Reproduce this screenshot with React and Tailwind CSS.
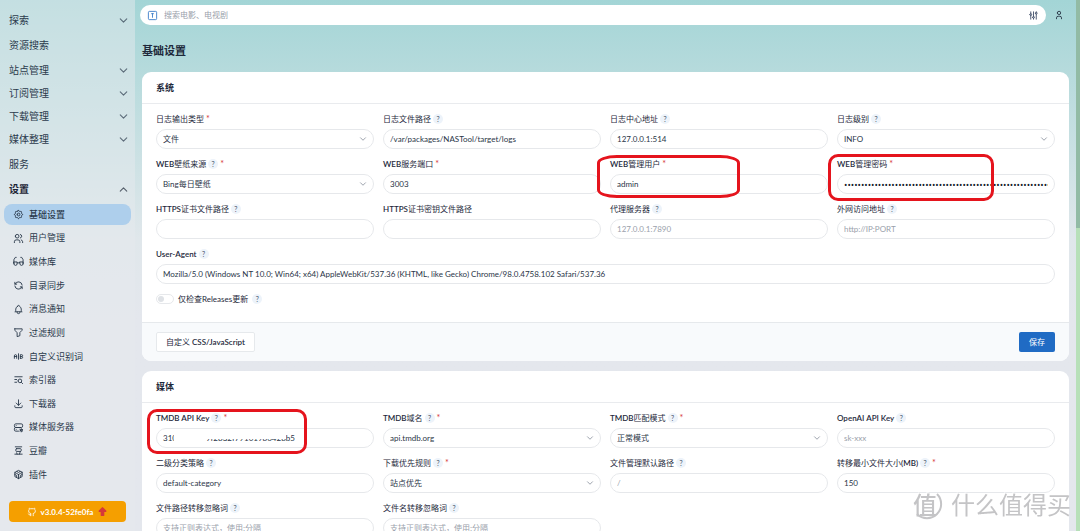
import {
  TbSettings,
  TbUsers,
  TbRefresh,
  TbBell,
  TbFilter,
  TbAB,
  TbListSearch,
  TbDownload,
  TbServerCog,
  TbBrandDouban,
  TbBrandCodesandbox,
  TbChevronDown,
  TbChevronUp,
  TbSquareLetterT,
  TbAdjustments,
  TbUser,
  TbBrandGithub,
  TbArrowBigUpFilled,
} from "react-icons/tb";

const GlassesIcon = ({ className }) => (
  <svg
    viewBox="0 0 24 24"
    className={className}
    fill="none"
    stroke="currentColor"
    strokeWidth="2"
    strokeLinecap="round"
    strokeLinejoin="round"
  >
    <path d="M7 3H5L2 8v9M17 3h2l3 5v9" />
    <path d="M2 13h7v4a3.500 3.500 0 0 1-7 0zM15 13h7v4a3.500 3.500 0 0 1-7 0zM9 15h6" />
  </svg>
);

const topMenu = [
  { label: "探索", group: true },
  { label: "资源搜索" },
  { label: "站点管理", group: true },
  { label: "订阅管理", group: true },
  { label: "下载管理", group: true },
  { label: "媒体整理", group: true },
  { label: "服务" },
  { label: "设置", group: true, open: true },
];

const settingsMenu = [
  { label: "基础设置", icon: TbSettings, active: true },
  { label: "用户管理", icon: TbUsers },
  { label: "媒体库", icon: GlassesIcon },
  { label: "目录同步", icon: TbRefresh },
  { label: "消息通知", icon: TbBell },
  { label: "过滤规则", icon: TbFilter },
  { label: "自定义识别词", icon: TbAB },
  { label: "索引器", icon: TbListSearch },
  { label: "下载器", icon: TbDownload },
  { label: "媒体服务器", icon: TbServerCog },
  { label: "豆瓣", icon: TbBrandDouban },
  { label: "插件", icon: TbBrandCodesandbox },
];

const systemFields = [
  { id: "logtype", label: "日志输出类型", required: true, type: "select", value: "文件" },
  { id: "logpath", label: "日志文件路径", help: true, value: "/var/packages/NASTool/target/logs" },
  { id: "logserver", label: "日志中心地址", help: true, value: "127.0.0.1:514" },
  { id: "loglevel", label: "日志级别", help: true, type: "select", value: "INFO" },
  { id: "wallpaper", label: "WEB壁纸来源", help: true, required: true, type: "select", value: "Bing每日壁纸" },
  { id: "port", label: "WEB服务端口", required: true, value: "3003" },
  { id: "user", label: "WEB管理用户", required: true, value: "admin", mark: "user" },
  { id: "password", label: "WEB管理密码", required: true, type: "password", value: "x".repeat(94), mark: "password" },
  { id: "cert", label: "HTTPS证书文件路径", help: true, value: "" },
  { id: "certkey", label: "HTTPS证书密钥文件路径", value: "" },
  { id: "proxy", label: "代理服务器", help: true, placeholder: "127.0.0.1:7890" },
  { id: "domain", label: "外网访问地址", help: true, placeholder: "http://IP:PORT" },
  {
    id: "ua",
    label: "User-Agent",
    help: true,
    wide: true,
    value:
      "Mozilla/5.0 (Windows NT 10.0; Win64; x64) AppleWebKit/537.36 (KHTML, like Gecko) Chrome/98.0.4758.102 Safari/537.36",
  },
];

const mediaFields = [
  { id: "tmdbkey", label: "TMDB API Key", help: true, required: true, value: "310a3b5c7f9f2832f79101986428b5", mark: "key" },
  { id: "tmdbdomain", label: "TMDB域名", help: true, required: true, type: "select", value: "api.tmdb.org" },
  { id: "tmdbmatch", label: "TMDB匹配模式", help: true, required: true, type: "select", value: "正常模式" },
  { id: "openai", label: "OpenAI API Key", help: true, placeholder: "sk-xxx" },
  { id: "category", label: "二级分类策略", help: true, value: "default-category" },
  { id: "priority", label: "下载优先规则", help: true, required: true, type: "select", value: "站点优先" },
  { id: "defaultpath", label: "文件管理默认路径", help: true, placeholder: "/" },
  { id: "minsize", label: "转移最小文件大小(MB)", help: true, required: true, value: "150" },
  { id: "ignorepath", label: "文件路径转移忽略词", help: true, placeholder: "支持正则表达式，使用;分隔" },
  { id: "ignorename", label: "文件名转移忽略词", help: true, placeholder: "支持正则表达式，使用;分隔" },
];

const marks = {
  user: "-left-[13px] -top-[3px] w-[143px] h-[43px] rounded-[20px/8px]",
  password: "-left-[9px] -top-[4px] w-[166px] h-[47px] rounded-[10px]",
  key: "-left-[9px] -top-[3px] w-[160px] h-[45px] rounded-[10px]",
};

const Help = () => (
  <span className="flex size-[10px] items-center justify-center rounded-full bg-[#edf3fa] text-[7px] text-[#49566c]">
    ?
  </span>
);

// latin words are set heavier than the chinese next to them
const LabelText = ({ text }) =>
  text
    .split(/([\x20-\x7e]+)/)
    .filter(Boolean)
    .map((part) => (
      <span key={part} className={/^[\x20-\x7e]/.test(part) ? "font-semibold" : ""}>
        {part}
      </span>
    ));

const inputClass =
  "block h-5 w-full appearance-none rounded-full border border-[#e6e8eb] bg-white px-[6px] text-[#2a3547] placeholder:text-[#9aa1ab] outline-none";

const Field = ({ field }) => (
  <div className={field.wide ? "relative col-span-4" : "relative"}>
    <div className="mb-1 flex h-3 items-center gap-[2px]">
      <label htmlFor={field.id} className="whitespace-nowrap text-[8px]">
        <LabelText text={field.label} />
      </label>
      {field.help && <Help />}
      {field.required && <span className="text-[9px] text-[#d63939]">*</span>}
    </div>

    {field.type === "select" ? (
      <div className="relative">
        <select id={field.id} className={`${inputClass} text-[8px]`}>
          <option>{field.value}</option>
        </select>
        <TbChevronDown className="pointer-events-none absolute right-[6px] top-[5px] size-[10px] text-[#8a929d]" />
      </div>
    ) : (
      <input
        id={field.id}
        type={field.type || "text"}
        defaultValue={field.value}
        placeholder={field.placeholder}
        className={`${inputClass} ${
          field.type === "password" ? "font-['Open_Sans',sans-serif] text-[9px] text-[#111827]" : "text-[8px]"
        }`}
      />
    )}

    {/* hidden part of the key */}
    {field.mark === "key" && (
      <>
        <span className="absolute left-[18px] top-[18px] h-4 w-[32px] bg-white" />
        <span className="absolute left-[50px] top-[18px] h-[9px] w-[80px] bg-white" />
      </>
    )}
    {field.mark && (
      <span className={`pointer-events-none absolute z-10 border-3 border-[#e5141d] ${marks[field.mark]}`} />
    )}
  </div>
);

const Card = ({ title, children, footer }) => (
  <section className="overflow-hidden rounded-[9px] bg-white">
    <h3 className="flex h-8 items-center border-b border-[#e9ebee] px-[14px] text-[9px] font-bold">{title}</h3>
    <div className="px-[14px] pb-[17px] pt-[9px]">{children}</div>
    {footer}
  </section>
);

const Sidebar = () => (
  <aside className="flex w-[135px] shrink-0 flex-col bg-[#e5e9ee]/50 pt-[9px] text-[#2b3a4c]">
    <nav className="flex flex-1 flex-col">
      {topMenu.map((item) => (
        <a
          key={item.label}
          href="#"
          className={`flex shrink-0 items-center justify-between pl-[9px] pr-[5px] text-[10px] ${
            item.group ? "h-[23px]" : "h-[27px]"
          } ${item.open ? "font-bold text-[#1b2434]" : ""}`}
        >
          {item.label}
          {item.group &&
            (item.open ? (
              <TbChevronUp className="size-[13px] opacity-70" />
            ) : (
              <TbChevronDown className="size-[13px] opacity-70" />
            ))}
        </a>
      ))}

      <div className="mb-4 mt-[3px] flex flex-1 flex-col justify-between px-1">
        {settingsMenu.map(({ label, icon: Icon, active }) => (
          <a
            key={label}
            href="#"
            className={`flex h-[21px] items-center gap-[5px] rounded-[8px] pl-[9px] text-[9px] ${
              active ? "bg-[#aecfec] font-medium" : ""
            }`}
          >
            <Icon className="size-[11px]" />
            {label}
          </a>
        ))}
      </div>
    </nav>

    <button
      type="button"
      className="mx-[9px] mb-[9px] flex h-[21px] items-center justify-center gap-1 rounded bg-[#f59f00] text-[8px] font-bold text-white"
    >
      <TbBrandGithub className="size-[10px]" />
      v3.0.4-52fe0fa
      <TbArrowBigUpFilled className="size-[11px] text-[#d63939]" />
    </button>
  </aside>
);

const Watermark = () => (
  <div className="pointer-events-none fixed bottom-[11px] right-[9px] z-20 flex items-center gap-2 text-[#c4c4c6] [text-shadow:-1px_-1px_0_#fff]">
    <div className="relative flex size-[30px] items-center text-[24px] font-medium leading-none">
      <svg viewBox="0 0 30 30" className="absolute inset-0" fill="none" stroke="currentColor" strokeWidth="2">
        <path d="M24 4a14 14 0 0 1-20 20" />
      </svg>
      值
    </div>
    <span className="text-[24px] leading-none">什么值得买</span>
  </div>
);

const App = () => {
  return (
    <div
      className="
        flex
        h-screen
        overflow-hidden
        bg-linear-to-b
        from-[#a3d5d6]
        via-[#e0e7eb]
        via-45%
        to-[#e4e7ed]
        to-60%
        font-['Lato','Noto_Sans_CJK_SC',sans-serif]
        text-[#1e293b]
      "
    >
      <Sidebar />

      <main className="min-w-0 flex-1 px-[7px] pt-[5px]">
        {/* SEARCH BAR */}
        <header className="-ml-[2px] mr-[5px] flex items-center gap-2">
          <div className="flex h-5 flex-1 items-center rounded-full bg-white pl-[7px] pr-[7px]">
            <TbSquareLetterT className="size-[11px] text-[#3e7fc9]" />
            <input
              type="text"
              aria-label="搜索"
              placeholder="搜索电影、电视剧"
              className="min-w-0 flex-1 px-[6px] text-[8px] outline-none placeholder:text-[#9aa1ab]"
            />
            <button type="button" aria-label="筛选">
              <TbAdjustments className="size-[11px] text-[#42506a]" />
            </button>
          </div>
          <button type="button" aria-label="用户">
            <TbUser className="size-[10px]" />
          </button>
        </header>

        <h2 className="mb-[13px] mt-[17px] text-[11px] font-bold leading-[17px]">基础设置</h2>

        <div className="flex flex-col gap-[10px]">
          <Card
            title="系统"
            footer={
              <div className="flex justify-between border-t border-[#e6e9ec] bg-[#f8fafc] px-[14px] py-[9px]">
                <button
                  type="button"
                  className="h-5 rounded-[2px] border border-[#e6e9ec] bg-white px-[9px] text-[8px]"
                >
                  <LabelText text="自定义 CSS/JavaScript" />
                </button>
                <button type="button" className="h-5 rounded-[2px] bg-[#206bc4] px-[10px] text-[8px] text-white">
                  保存
                </button>
              </div>
            }
          >
            <div className="grid grid-cols-4 gap-[9px]">
              {systemFields.map((field) => (
                <Field key={field.id} field={field} />
              ))}
            </div>
            <div className="mt-[9px] flex h-3 items-center gap-1">
              <input
                id="releases"
                type="checkbox"
                className="h-[10px] w-[18px] appearance-none rounded-full border border-[#e6e8eb] before:ml-px before:mt-px before:block before:size-[6px] before:rounded-full before:bg-[#dfe2e6]"
              />
              <label htmlFor="releases" className="text-[8px]">
                仅检查Releases更新
              </label>
              <Help />
            </div>
          </Card>

          <Card title="媒体">
            <div className="grid grid-cols-4 gap-[9px]">
              {mediaFields.map((field) => (
                <Field key={field.id} field={field} />
              ))}
            </div>
          </Card>
        </div>
      </main>

      {/* SCROLLBAR */}
      <div className="w-1 shrink-0 bg-[#b7e0b9]">
        <div className="h-[43%] bg-[#92bba5]" />
      </div>

      <Watermark />
    </div>
  );
};

export default App;
